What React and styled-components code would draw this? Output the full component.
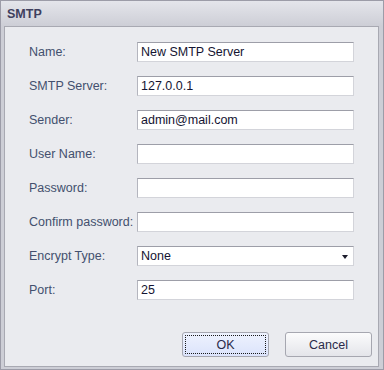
import React from "react";
import styled, { createGlobalStyle } from "styled-components";

const GlobalStyle = createGlobalStyle`
    html, body {
        margin: 0;
        padding: 0;
        background: #ffffff;
    }
    * {
        box-sizing: border-box;
    }
`;

const Window = styled.div`
    width: 384px;
    height: 370px;
    display: flex;
    flex-direction: column;
    border: 1px solid #9c9ca8;
    background: linear-gradient(#e4e5eb, #cdced6 25px, #cdced6);
    padding: 0 4px 2px 3px;
    font-family: "Liberation Sans", Arial, sans-serif;
`;

const TitleBar = styled.div`
    height: 25px;
    display: flex;
    align-items: center;
    padding-left: 3px;
    font-size: 12.5px;
    font-weight: bold;
    color: #3f3f5e;
`;

const Panel = styled.div`
    flex: 1;
    display: flex;
    flex-direction: column;
    background: #eaebef;
    border: 1px solid #a8a9b2;
    padding: 15px 6px 9px 24px;
`;

const Form = styled.div`
    display: flex;
    flex-direction: column;
    gap: 14px;
`;

const Row = styled.div`
    display: flex;
    align-items: center;
    height: 20px;
`;

const Label = styled.div`
    width: 108px;
    font-size: 12.5px;
    color: #43506e;
`;

const Field = styled.div`
    position: relative;
    width: 217px;
    height: 20px;
    background: #ffffff;
    border: 1px solid #d3d4da;
    border-top-color: #9d9ea8;
    border-left-color: #b4b5be;
    display: flex;
    align-items: center;
    padding-left: 3px;
    font-size: 12.5px;
    color: #141432;
`;

const Arrow = styled.div`
    position: absolute;
    right: 5px;
    top: 8px;
    width: 0;
    height: 0;
    border-left: 3.5px solid transparent;
    border-right: 3.5px solid transparent;
    border-top: 4px solid #1c1c2c;
`;

const Footer = styled.div`
    margin-top: auto;
    display: flex;
    justify-content: flex-end;
    gap: 16px;
`;

const Button = styled.div`
    width: 87px;
    height: 25px;
    display: flex;
    align-items: center;
    justify-content: center;
    border: 1px solid #a6a7b0;
    border-radius: 3px;
    font-size: 12.5px;
    color: #2a2a4a;
    background: ${({ $primary }) =>
        $primary
            ? "linear-gradient(#eef2fe, #dbe3fb)"
            : "linear-gradient(#fbfbfc, #e4e5ea)"};
    position: relative;
`;

const Focus = styled.div`
    position: absolute;
    inset: 2px;
    border: 1px dotted #1a1a1a;
    border-radius: 1px;
`;

const fields = [
    { label: "Name:", value: "New SMTP Server" },
    { label: "SMTP Server:", value: "127.0.0.1" },
    { label: "Sender:", value: "admin@mail.com" },
    { label: "User Name:", value: "" },
    { label: "Password:", value: "" },
    { label: "Confirm password:", value: "" },
    { label: "Encrypt Type:", value: "None", select: true },
    { label: "Port:", value: "25" },
];

const App = () => {
    return (
        <>
            <GlobalStyle />
            <Window>
                <TitleBar>SMTP</TitleBar>
                <Panel>
                    <Form>
                        {fields.map((f) => (
                            <Row key={f.label}>
                                <Label>{f.label}</Label>
                                <Field>
                                    {f.value}
                                    {f.select && <Arrow />}
                                </Field>
                            </Row>
                        ))}
                    </Form>
                    <Footer>
                        <Button $primary>
                            <Focus />
                            OK
                        </Button>
                        <Button>Cancel</Button>
                    </Footer>
                </Panel>
            </Window>
        </>
    );
};

export default App;
